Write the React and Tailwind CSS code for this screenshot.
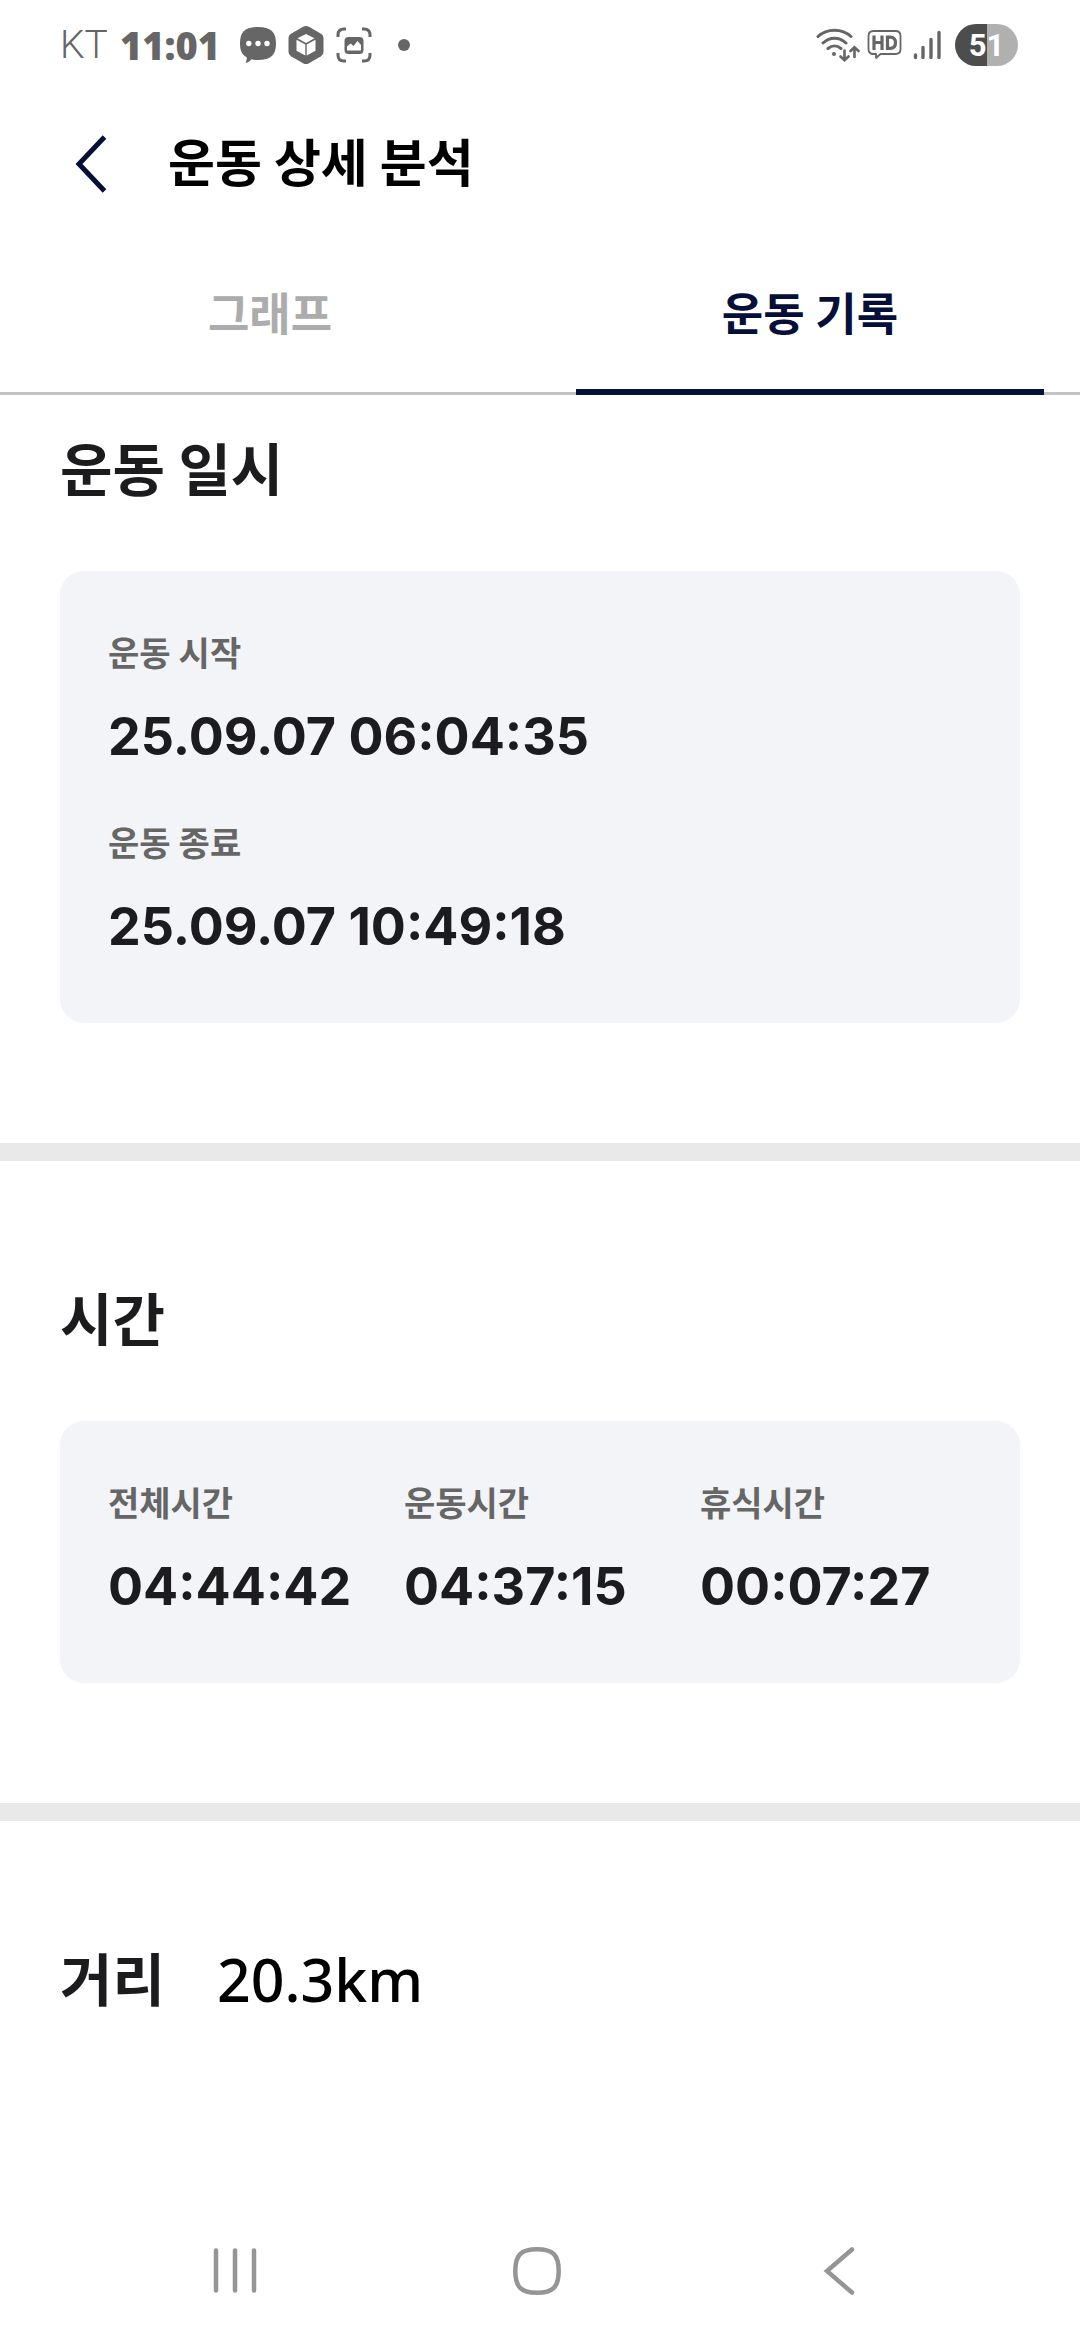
import React from "react";

function StatusBar() {
  return (
    <div className="flex h-[90px] items-center justify-between pr-[62px] pl-[60px] text-[#666666]">
      <div className="flex items-center">
        <span className="font-['Roboto',sans-serif] text-[39px] leading-none font-light">KT</span>
        <span className="ml-3 font-['Open_Sans',sans-serif] text-[38px] leading-none font-extrabold">11:01</span>
        <svg className="ml-5 h-[40px] w-[36px]" viewBox="0 0 36 40" fill="currentColor" aria-hidden="true">
          <path d="M18 2C31 2 36 7 36 18.500S31 35 18 35C15.500 35 13.500 34.800 11.500 34.300C10 36.200 8 37.600 5.400 38C6.400 36.300 6.900 34.500 6.700 32.300C2 29.800 0 25.500 0 18.500C0 7 5 2 18 2Z" />
          <g fill="#fff">
            <circle cx="8.800" cy="18.500" r="2.700" />
            <circle cx="18" cy="18.500" r="2.700" />
            <circle cx="27" cy="18.500" r="2.700" />
          </g>
        </svg>
        <svg className="ml-3 h-[40px] w-[36px]" viewBox="0 0 36 40" aria-hidden="true">
          <path d="M15.500 1.600Q18 .2 20.500 1.600L33 8.700Q35.500 10.200 35.500 13V27Q35.500 29.800 33 31.300L20.500 38.400Q18 39.800 15.500 38.400L3 31.300Q.5 29.800 .5 27V13Q.5 10.200 3 8.700Z" fill="currentColor" />
          <path d="M18 9L26.500 13.200L18 18L9.500 13.200Z" fill="#fff" />
          <path d="M8.500 14.700L17.300 19.500V30.500L8.500 25.700Z" fill="#fff" />
          <path d="M27.500 14.700L18.700 19.500V30.500L27.500 25.700Z" fill="#fff" />
        </svg>
        <svg className="ml-3 h-[36px] w-[36px]" viewBox="0 0 36 36" fill="none" aria-hidden="true">
          <path d="M2 10V8Q2 2 8 2H10M26 2H28Q34 2 34 8V10M34 26V28Q34 34 28 34H26M10 34H8Q2 34 2 28V26" stroke="currentColor" strokeWidth="3" />
          <rect x="8.500" y="10" width="19" height="17" rx="4" fill="currentColor" />
          <path d="M11 23.500V19.500L14.500 16.500L17.500 19L21.500 14L25 18V23.500Z" fill="#fff" />
        </svg>
        <span className="ml-[26px] size-3 rounded-full bg-[#666666]" />
      </div>
      <div className="flex items-center">
        <svg className="h-[36px] w-[44px]" viewBox="0 0 44 36" fill="none" stroke="currentColor" strokeWidth="3" strokeLinecap="round" aria-hidden="true">
          <path d="M2 9.500C11 1 26 1 35 9.500M7 16C14 9.500 23 9.500 30 16M12 21.500C16 18 21 18 25 21.500" />
          <circle cx="18" cy="27" r="2" fill="currentColor" stroke="none" />
          <path d="M28.500 23.500V33M24.500 29.500L28.500 33.200L32.500 29.500M38.500 30V20.500M34.500 24L38.500 20.300L42.500 24" strokeWidth="2.600" />
        </svg>
        <svg className="ml-[7px] h-[32px] w-[35px]" viewBox="0 0 35 32" fill="none" stroke="currentColor" aria-hidden="true">
          <path d="M6.500 2H28.500Q33.500 2 33.500 7V20Q33.500 25 28.500 25H13.500L9 29V25H6.500Q1.500 25 1.500 20V7Q1.500 2 6.500 2Z" strokeWidth="1.800" strokeLinejoin="round" />
          <path d="M7 6.500V21M15 6.500V21M7 13.500H15M20.500 8.200V19.300H23Q28.500 19.300 28.500 13.700T23 8.200Z" strokeWidth="3.200" />
        </svg>
        <svg className="ml-[11px] h-[30px] w-[28px]" viewBox="0 0 28 30" stroke="currentColor" strokeWidth="3.400" strokeLinecap="round" aria-hidden="true">
          <path d="M2.500 25V27.500M10 17.500V27.500M18 9.500V27.500M26 2.500V27.500" />
        </svg>
        <div className="ml-[14px] flex h-[42px] w-[63px] items-center justify-center rounded-full bg-linear-to-r from-[#4d4d4d] from-50% to-[#b0b0b0] to-50% font-['Roboto',sans-serif] text-[31px] leading-none font-bold text-white">
          51
        </div>
      </div>
    </div>
  );
}

function Header() {
  return (
    <header className="flex h-[148px] items-center pl-[60px]">
      <button type="button" aria-label="뒤로" className="flex h-[72px] w-[62px] items-center justify-center">
        <svg className="h-[60px] w-[32px]" viewBox="0 0 32 60" fill="none" stroke="#060f38" strokeWidth="5" aria-hidden="true">
          <path d="M29.500 3L4 30L29.500 57" />
        </svg>
      </button>
      <h1 className="ml-[46px] text-[51px] leading-[72px] font-bold text-black">운동 상세 분석</h1>
    </header>
  );
}

function Tabs() {
  return (
    <div role="tablist" className="grid h-[157px] grid-cols-2 border-b-3 border-[#c3c4ca] text-[45px] font-bold">
      <button type="button" role="tab" aria-selected="false" className="text-[#acacac]">
        그래프
      </button>
      <button type="button" role="tab" aria-selected="true" className="relative text-[#060f38]">
        운동 기록
        <span className="absolute inset-x-9 -bottom-[3px] h-[6px] bg-[#060f38]" />
      </button>
    </div>
  );
}

function Stat({ label, value }) {
  return (
    <div className="flex flex-col gap-4">
      <dt className="text-[34px] leading-[54px] font-bold text-[#666666]">{label}</dt>
      <dd className="text-[52px] leading-[80px] font-bold whitespace-nowrap text-[#1c1c1e]">{value}</dd>
    </div>
  );
}

function SectionTitle({ children }) {
  return <h2 className="text-[57px] leading-[80px] font-bold text-[#1c1c1e]">{children}</h2>;
}

function Divider() {
  return <div className="h-[18px] bg-[#e9e9e9]" />;
}

function NavBar() {
  return (
    <nav className="mt-auto grid h-[138px] grid-cols-3 items-center pr-[90px] pl-[84px] text-[#959595]">
      <button type="button" aria-label="최근 앱" className="flex justify-center">
        <svg className="h-[48px] w-[44px]" viewBox="0 0 44 48" stroke="currentColor" strokeWidth="4.500" strokeLinecap="round" aria-hidden="true">
          <path d="M3 3.500V43.500M22 3.500V43.500M41 3.500V43.500" />
        </svg>
      </button>
      <button type="button" aria-label="홈" className="flex justify-center">
        <svg className="size-[48px]" viewBox="0 0 48 48" fill="none" stroke="currentColor" strokeWidth="4.500" aria-hidden="true">
          <path d="M24 2.300C40 2.300 45.700 8 45.700 24S40 45.700 24 45.700S2.300 40 2.300 24S8 2.300 24 2.300Z" />
        </svg>
      </button>
      <button type="button" aria-label="뒤로 가기" className="flex justify-center">
        <svg className="h-[48px] w-[32px]" viewBox="0 0 32 48" fill="none" stroke="currentColor" strokeWidth="4.500" strokeLinecap="round" aria-hidden="true">
          <path d="M29 2.500L4 24L29 45.500" />
        </svg>
      </button>
    </nav>
  );
}

export default function App() {
  return (
    <div className="flex min-h-screen flex-col bg-white font-['Inter','Noto_Sans_CJK_KR',sans-serif]">
      <StatusBar />
      <Header />
      <Tabs />
      <main>
        <section className="px-[60px] pt-9 pb-[120px]">
          <SectionTitle>운동 일시</SectionTitle>
          <dl className="mt-[60px] flex flex-col gap-10 rounded-3xl bg-[#f3f4f8] px-12 py-14">
            <Stat label="운동 시작" value="25.09.07 06:04:35" />
            <Stat label="운동 종료" value="25.09.07 10:49:18" />
          </dl>
        </section>
        <Divider />
        <section className="px-[60px] py-[120px]">
          <SectionTitle>시간</SectionTitle>
          <dl className="mt-[60px] grid grid-cols-3 gap-6 rounded-3xl bg-[#f3f4f8] px-12 py-14">
            <Stat label="전체시간" value="04:44:42" />
            <Stat label="운동시간" value="04:37:15" />
            <Stat label="휴식시간" value="00:07:27" />
          </dl>
        </section>
        <Divider />
        <section className="flex items-start gap-[52px] px-[60px] pt-[120px]">
          <SectionTitle>거리</SectionTitle>
          <p className="font-['Noto_Sans',sans-serif] text-[59px] leading-[76px] font-medium text-black">20.3km</p>
        </section>
      </main>
      <NavBar />
    </div>
  );
}
